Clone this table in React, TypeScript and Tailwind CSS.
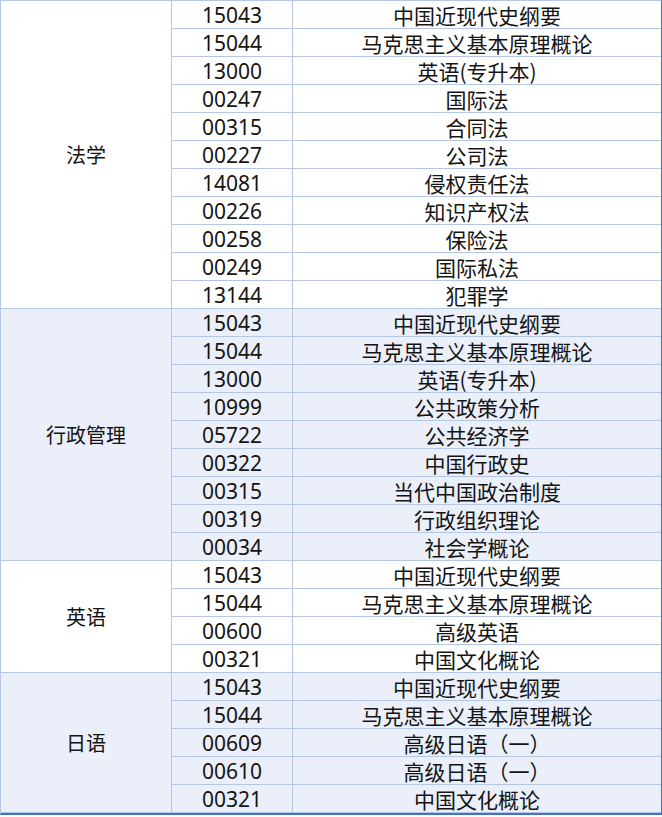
const GROUPS = [
  {
    name: '法学',
    shaded: false,
    rows: [
      ['15043', '中国近现代史纲要'],
      ['15044', '马克思主义基本原理概论'],
      ['13000', '英语(专升本)'],
      ['00247', '国际法'],
      ['00315', '合同法'],
      ['00227', '公司法'],
      ['14081', '侵权责任法'],
      ['00226', '知识产权法'],
      ['00258', '保险法'],
      ['00249', '国际私法'],
      ['13144', '犯罪学'],
    ],
  },
  {
    name: '行政管理',
    shaded: true,
    rows: [
      ['15043', '中国近现代史纲要'],
      ['15044', '马克思主义基本原理概论'],
      ['13000', '英语(专升本)'],
      ['10999', '公共政策分析'],
      ['05722', '公共经济学'],
      ['00322', '中国行政史'],
      ['00315', '当代中国政治制度'],
      ['00319', '行政组织理论'],
      ['00034', '社会学概论'],
    ],
  },
  {
    name: '英语',
    shaded: false,
    rows: [
      ['15043', '中国近现代史纲要'],
      ['15044', '马克思主义基本原理概论'],
      ['00600', '高级英语'],
      ['00321', '中国文化概论'],
    ],
  },
  {
    name: '日语',
    shaded: true,
    rows: [
      ['15043', '中国近现代史纲要'],
      ['15044', '马克思主义基本原理概论'],
      ['00609', '高级日语（一）'],
      ['00610', '高级日语（一）'],
      ['00321', '中国文化概论'],
    ],
  },
]

export default function App() {
  return (
    <div className="w-[662px] h-[817px] bg-white font-['Noto_Sans_CJK_SC','Noto_Sans',sans-serif] text-[21px] text-[#141414]">
      <div className="border-t border-l border-r border-b-2 border-t-[#b4c7e7] border-l-[#b4c7e7] border-r-[#4472c4] border-b-[#4472c4]">
        {GROUPS.map(g => (
          <div key={g.name} className={g.shaded ? 'flex bg-[#eaeff9]' : 'flex bg-white'}>
            <div className="w-[171px] shrink-0 flex items-center justify-center border-r border-b border-[#b4c7e7] text-[20px]">
              {g.name}
            </div>
            <div className="flex-1 flex flex-col">
              {g.rows.map(([code, course], i) => (
                <div key={i} className="h-[28px] flex border-b border-[#b4c7e7] leading-none">
                  <div className="w-[121px] shrink-0 flex items-center justify-center pt-[1px] border-r border-[#b4c7e7] font-['Noto_Sans',sans-serif]">
                    {code}
                  </div>
                  <div className="flex-1 flex items-center justify-center pt-[1px]">{course}</div>
                </div>
              ))}
            </div>
          </div>
        ))}
      </div>
    </div>
  )
}
